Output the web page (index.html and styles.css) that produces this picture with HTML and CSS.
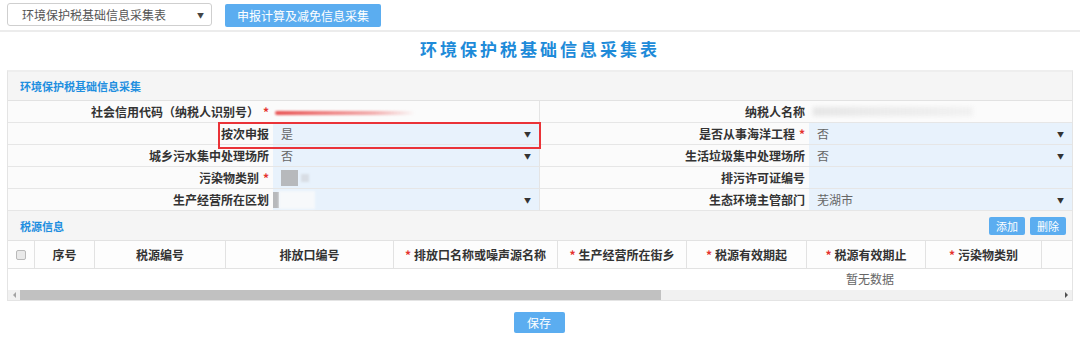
FILE: index.html
```html
<!DOCTYPE html>
<html lang="zh">
<head>
<meta charset="utf-8">
<link rel="stylesheet" href="styles.css">
</head>
<body>
<div class="topbar">
  <div class="select-box"><span>环境保护税基础信息采集表</span><span class="caret">▼</span></div>
  <button class="btn btn-wide">申报计算及减免信息采集</button>
</div>
<h1 class="page-title">环境保护税基础信息采集表</h1>
<div class="panel">
  <div class="panel-head"><span class="panel-title">环境保护税基础信息采集</span></div>
  <div class="form-grid">
    <div class="lbl">社会信用代码（纳税人识别号）<i>*</i></div>
    <div class="val plain"><span class="smear-red"></span></div>
    <div class="lbl">纳税人名称</div>
    <div class="val plain"><span class="smear-gray"></span></div>

    <div class="lbl">按次申报</div>
    <div class="val">是<span class="caret">▼</span></div>
    <div class="lbl">是否从事海洋工程<i>*</i></div>
    <div class="val">否<span class="caret">▼</span></div>

    <div class="lbl">城乡污水集中处理场所</div>
    <div class="val">否<span class="caret">▼</span></div>
    <div class="lbl">生活垃圾集中处理场所</div>
    <div class="val">否<span class="caret">▼</span></div>

    <div class="lbl">污染物类别<i>*</i></div>
    <div class="val"><span class="blk"></span><span class="blk-fade"></span></div>
    <div class="lbl">排污许可证编号</div>
    <div class="val"></div>

    <div class="lbl">生产经营所在区划</div>
    <div class="val"><span class="blk thin"></span><span class="blk-white"></span><span class="caret">▼</span></div>
    <div class="lbl">生态环境主管部门</div>
    <div class="val">芜湖市<span class="caret">▼</span></div>
    <div class="highlight"></div>
  </div>
  <div class="panel-head sub">
    <span class="panel-title">税源信息</span>
    <div class="actions"><button class="btn sm">添加</button><button class="btn sm">删除</button></div>
  </div>
  <div class="scroller">
    <div class="table">
      <div class="thead">
        <div class="th"><span class="chk"></span></div>
        <div class="th">序号</div>
        <div class="th">税源编号</div>
        <div class="th">排放口编号</div>
        <div class="th"><i>*</i>排放口名称或噪声源名称</div>
        <div class="th"><i>*</i>生产经营所在街乡</div>
        <div class="th"><i>*</i>税源有效期起</div>
        <div class="th"><i>*</i>税源有效期止</div>
        <div class="th"><i>*</i>污染物类别</div>
        <div class="th"></div>
        <div class="th"></div>
      </div>
      <div class="tbody">暂无数据</div>
    </div>
  </div>
  <div class="hscroll">
    <span class="arr left"></span>
    <div class="track"><div class="thumb"></div></div>
    <span class="arr right"></span>
  </div>
</div>
<div class="footer"><button class="btn save">保存</button></div>
</body>
</html>
```
FILE: styles.css
```css
* { box-sizing: border-box; }
html, body { margin: 0; padding: 0; background: #fff; }
body {
  width: 1080px;
  height: 339px;
  overflow: hidden;
  font-family: "Noto Sans CJK SC", "Noto Sans", sans-serif;
  font-size: 12px;
  color: #333;
}
.topbar {
  height: 32px;
  display: flex;
  align-items: flex-start;
  gap: 13px;
  padding: 3px 0 0 7px;
  border-bottom: 2px solid #ececec;
}
.select-box {
  width: 205px;
  height: 23px;
  border: 1px solid #cfcfcf;
  border-radius: 3px;
  display: flex;
  align-items: center;
  justify-content: space-between;
  padding: 0 7px 0 14px;
  color: #555;
  font-size: 12px;
}
.select-box .caret { font-size: 7px; color: #444; }
.btn {
  border: none;
  background: #5badf0;
  color: #fff;
  font-family: inherit;
  border-radius: 2px;
  padding: 0;
  cursor: pointer;
}
.btn-wide {
  width: 156px;
  height: 23px;
  margin-top: 1px;
  font-size: 12px;
}
.page-title {
  margin: 0;
  height: 38px;
  padding-top: 4px;
  text-align: center;
  font-size: 17px;
  letter-spacing: 3px;
  color: #1e8bd9;
  font-weight: bold;
}
.panel {
  margin: 0 7px;
  border: 1px solid #e4e4e4;
  border-top: 2px solid #eeeeee;
}
.panel-head {
  height: 29px;
  background: #f5f5f5;
  display: flex;
  align-items: center;
  padding: 0 12px;
  border-bottom: 1px solid #e2e2e2;
}
.panel-head.sub {
  height: 30px;
  justify-content: space-between;
  padding-right: 6px;
}
.panel-title {
  color: #1f8fe0;
  font-weight: bold;
  font-size: 11px;
}
.actions { display: flex; gap: 5px; }
.btn.sm {
  width: 36px;
  height: 18px;
  font-size: 11px;
  border-radius: 2px;
}
.form-grid {
  position: relative;
  display: grid;
  grid-template-columns: 265px 266px 270px 263px;
  grid-auto-rows: 22px;
}
.lbl {
  background: #fbfbfb;
  border-bottom: 1px solid #e6e6e6;
  display: flex;
  align-items: center;
  justify-content: flex-end;
  padding-right: 4px;
  font-weight: bold;
  color: #333;
  white-space: nowrap;
}
.lbl:nth-child(4n+3) { border-left: 1px solid #e4e4e4; }
.lbl i, .th i {
  color: #e5322d;
  font-style: normal;
  font-weight: bold;
  margin-left: 4px;
}
.th i { margin: 0 3px 0 0; }
.val {
  background: #e8f2fc;
  border-bottom: 1px solid #e6e6e6;
  display: flex;
  align-items: center;
  padding: 0 8px;
  color: #666;
  position: relative;
}
.val.plain { background: #fbfbfb; }
.val .caret {
  margin-left: auto;
  font-size: 7px;
  color: #333;
}
.smear-red {
  display: block;
  width: 140px;
  height: 4px;
  margin-top: 2px;
  margin-left: -6px;
  background: linear-gradient(90deg, rgba(230,60,60,0.9), rgba(235,110,110,0.55) 70%, rgba(240,160,160,0));
  filter: blur(1px);
  border-radius: 2px;
}
.smear-gray {
  display: block;
  width: 160px;
  height: 9px;
  margin-left: -4px;
  background: linear-gradient(90deg, rgba(225,225,225,0.8), rgba(235,235,235,0.6));
  filter: blur(2px);
}
.blk {
  display: block;
  width: 17px;
  height: 16px;
  background: #b7b9bc;
  filter: blur(0.6px);
}
.blk.thin { width: 6px; margin-left: -8px; }
.blk-fade {
  display: block;
  width: 8px;
  height: 8px;
  margin-left: 3px;
  background: #d8dde4;
  filter: blur(1px);
}
.blk-white {
  display: block;
  width: 36px;
  height: 18px;
  background: #f7f9fb;
  filter: blur(1px);
}
.highlight {
  position: absolute;
  left: 210px;
  top: 21px;
  width: 323px;
  height: 27px;
  border: 2px solid #ea3338;
  pointer-events: none;
}
.scroller {
  overflow: hidden;
  width: 100%;
}
.table { width: 1722px; }
.thead {
  display: grid;
  grid-template-columns: 27px 60px 131px 168px 164px 129px 120px 119px 116px 32px 656px;
  height: 28px;
  background: #fdfdfd;
  border-bottom: 1px solid #e2e2e2;
}
.th {
  border-right: 1px solid #e2e2e2;
  display: flex;
  align-items: center;
  justify-content: center;
  font-weight: bold;
  white-space: nowrap;
}
.chk {
  width: 10px;
  height: 10px;
  border: 1px solid #b9b9b9;
  border-radius: 2px;
  background: #e9e9e9;
}
.tbody {
  height: 21px;
  display: flex;
  align-items: center;
  justify-content: center;
  color: #666;
  background: #fff;
  padding: 0 0 2px 2px;
}
.hscroll {
  height: 10px;
  display: flex;
  align-items: center;
  background: #f1f1f1;
}
.track { flex: 1; height: 10px; }
.thumb {
  width: 641px;
  height: 10px;
  background: #c1c1c1;
}
.arr {
  width: 12px;
  height: 10px;
  display: flex;
  align-items: center;
  justify-content: center;
}
.arr::before {
  content: "";
  border-top: 3px solid transparent;
  border-bottom: 3px solid transparent;
}
.arr.left::before { border-right: 3px solid #a3a3a3; }
.arr.right::before { border-left: 3px solid #505050; }
.footer {
  display: flex;
  justify-content: center;
  padding-top: 11px;
}
.btn.save {
  width: 51px;
  height: 21px;
  font-size: 12px;
  margin-left: -2px;
}
```
